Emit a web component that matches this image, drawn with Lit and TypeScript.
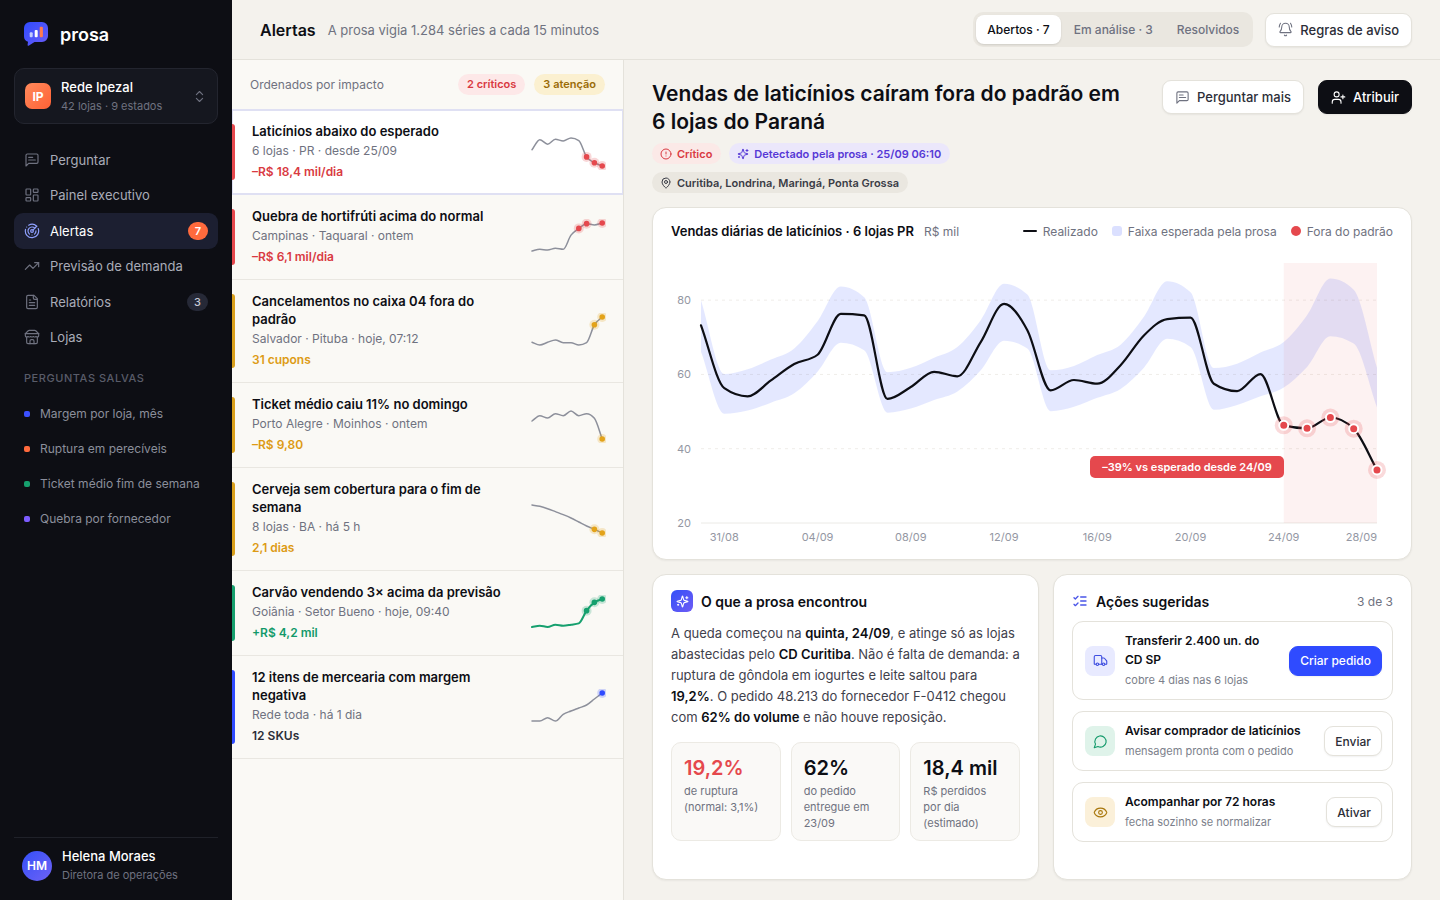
import { LitElement, html, svg, css, nothing } from "lit";
import { customElement, property } from "lit/decorators.js";
import { classMap } from "lit/directives/class-map.js";

type Point = [number, number];

/* Monotone cubic interpolation, as SVG curve segments. */
function curve(points: Point[], start = "M"): string {
  const n = points.length;
  const slope = (i: number) =>
    (points[i + 1][1] - points[i][1]) / (points[i + 1][0] - points[i][0]);
  const tangent = points.map((_, i) => {
    if (i === 0) return slope(0);
    if (i === n - 1) return slope(n - 2);
    const a = slope(i - 1);
    const b = slope(i);
    if (a * b <= 0) return 0;
    const sign = Math.sign(a);
    return sign * Math.min(Math.abs(a), Math.abs(b), Math.abs((a + b) / 4)) * 2;
  });
  let d = `${start}${points[0][0]},${points[0][1]}`;
  for (let i = 0; i < n - 1; i++) {
    const [x0, y0] = points[i];
    const [x1, y1] = points[i + 1];
    const dx = (x1 - x0) / 3;
    d += `C${(x0 + dx).toFixed(2)},${(y0 + tangent[i] * dx).toFixed(2)} ${(x1 - dx).toFixed(2)},${(y1 - tangent[i + 1] * dx).toFixed(2)} ${x1.toFixed(2)},${y1.toFixed(2)}`;
  }
  return d;
}

const ICONS = {
  message: svg`<path d="M21 15a2 2 0 0 1-2 2H7l-4 4V5a2 2 0 0 1 2-2h14a2 2 0 0 1 2 2z"/><path d="M13 8H7"/><path d="M17 12H7"/>`,
  dashboard: svg`<rect width="7" height="9" x="3" y="3" rx="1"/><rect width="7" height="5" x="14" y="3" rx="1"/><rect width="7" height="9" x="14" y="12" rx="1"/><rect width="7" height="5" x="3" y="16" rx="1"/>`,
  radar: svg`<path d="M19.07 4.93A10 10 0 0 0 6.99 3.34"/><path d="M4 6h.01"/><path d="M2.29 9.62A10 10 0 1 0 21.31 8.35"/><path d="M16.24 7.76A6 6 0 1 0 8.23 16.67"/><path d="M12 18h.01"/><path d="M17.99 11.66A6 6 0 0 1 15.77 16.67"/><circle cx="12" cy="12" r="2"/><path d="m13.41 10.59 5.66-5.66"/>`,
  trend: svg`<path d="M16 7h6v6"/><path d="m22 7-8.5 8.5-5-5L2 17"/>`,
  file: svg`<path d="M15 2H6a2 2 0 0 0-2 2v16a2 2 0 0 0 2 2h12a2 2 0 0 0 2-2V7Z"/><path d="M14 2v4a2 2 0 0 0 2 2h4"/><path d="M10 9H8"/><path d="M16 13H8"/><path d="M16 17H8"/>`,
  store: svg`<path d="m2 7 4.41-4.41A2 2 0 0 1 7.83 2h8.34a2 2 0 0 1 1.42.59L22 7"/><path d="M4 12v8a2 2 0 0 0 2 2h12a2 2 0 0 0 2-2v-8"/><path d="M15 22v-4a2 2 0 0 0-2-2h-2a2 2 0 0 0-2 2v4"/><path d="M2 7h20"/><path d="M22 7v3a2 2 0 0 1-2 2a2.7 2.7 0 0 1-1.59-.63.7.7 0 0 0-.82 0A2.7 2.7 0 0 1 16 12a2.7 2.7 0 0 1-1.59-.63.7.7 0 0 0-.82 0A2.7 2.7 0 0 1 12 12a2.7 2.7 0 0 1-1.59-.63.7.7 0 0 0-.82 0A2.7 2.7 0 0 1 8 12a2.7 2.7 0 0 1-1.59-.63.7.7 0 0 0-.82 0A2.7 2.7 0 0 1 4 12a2 2 0 0 1-2-2V7"/>`,
  updown: svg`<path d="m7 15 5 5 5-5"/><path d="m7 9 5-5 5 5"/>`,
  bell: svg`<path d="M10.268 21a2 2 0 0 0 3.464 0"/><path d="M22 8c0-2.3-.8-4.3-2-6"/><path d="M3.262 15.326A1 1 0 0 0 4 17h16a1 1 0 0 0 .74-1.673C19.41 13.956 18 12.499 18 8A6 6 0 0 0 6 8c0 4.499-1.411 5.956-2.738 7.326"/><path d="M4 2C2.8 3.7 2 5.7 2 8"/>`,
  userPlus: svg`<path d="M16 21v-2a4 4 0 0 0-4-4H6a4 4 0 0 0-4 4v2"/><circle cx="9" cy="7" r="4"/><path d="M19 8v6"/><path d="M22 11h-6"/>`,
  alert: svg`<circle cx="12" cy="12" r="10"/><path d="M12 8v4"/><path d="M12 16h.01"/>`,
  sparkles: svg`<path d="M9.937 15.5A2 2 0 0 0 8.5 14.063l-6.135-1.582a.5.5 0 0 1 0-.962L8.5 9.936A2 2 0 0 0 9.937 8.5l1.582-6.135a.5.5 0 0 1 .963 0L14.063 8.5A2 2 0 0 0 15.5 9.937l6.135 1.581a.5.5 0 0 1 0 .964L15.5 14.063a2 2 0 0 0-1.437 1.437l-1.582 6.135a.5.5 0 0 1-.963 0z"/><path d="M20 3v4"/><path d="M22 5h-4"/><path d="M4 17v2"/><path d="M5 18H3"/>`,
  pin: svg`<path d="M20 10c0 4.993-5.539 10.193-7.399 11.799a1 1 0 0 1-1.202 0C9.539 20.193 4 14.993 4 10a8 8 0 0 1 16 0"/><circle cx="12" cy="10" r="3"/>`,
  checks: svg`<path d="m3 17 2 2 4-4"/><path d="m3 7 2 2 4-4"/><path d="M13 6h8"/><path d="M13 12h8"/><path d="M13 18h8"/>`,
  truck: svg`<path d="M14 18V6a2 2 0 0 0-2-2H4a2 2 0 0 0-2 2v11a1 1 0 0 0 1 1h2"/><path d="M15 18H9"/><path d="M19 18h2a1 1 0 0 0 1-1v-3.65a1 1 0 0 0-.22-.624l-3.48-4.35A1 1 0 0 0 17.52 8H14"/><circle cx="17" cy="18" r="2"/><circle cx="7" cy="18" r="2"/>`,
  bubble: svg`<path d="M7.9 20A9 9 0 1 0 4 16.1L2 22Z"/>`,
  eye: svg`<path d="M2.062 12.348a1 1 0 0 1 0-.696 10.75 10.75 0 0 1 19.876 0 1 1 0 0 1 0 .696 10.75 10.75 0 0 1-19.876 0"/><circle cx="12" cy="12" r="3"/>`,
};
type IconName = keyof typeof ICONS;

const icon = (name: IconName, size = 16, weight = 1.75) => html`<svg
  class="icon" width=${size} height=${size} viewBox="0 0 24 24" fill="none"
  stroke="currentColor" stroke-width=${weight} stroke-linecap="round"
  stroke-linejoin="round" aria-hidden="true">${ICONS[name]}</svg>`;

const base = css`
  * { box-sizing: border-box; }
  a { color: inherit; text-decoration: none; }
  button { font: inherit; color: inherit; border: 0; background: none; padding: 0; cursor: pointer; }
  h1, h2, h3, p, ul { margin: 0; padding: 0; font-size: inherit; font-weight: inherit; }
  ul { list-style: none; }
  svg { display: block; flex: none; }
`;

/* ---------- Sidebar ---------- */

const NAV: { icon: IconName; label: string; count?: number; active?: boolean }[] = [
  { icon: "message", label: "Perguntar" },
  { icon: "dashboard", label: "Painel executivo" },
  { icon: "radar", label: "Alertas", count: 7, active: true },
  { icon: "trend", label: "Previsão de demanda" },
  { icon: "file", label: "Relatórios", count: 3 },
  { icon: "store", label: "Lojas" },
];

const SAVED = [
  { tone: "blue", label: "Margem por loja, mês" },
  { tone: "orange", label: "Ruptura em perecíveis" },
  { tone: "green", label: "Ticket médio fim de semana" },
  { tone: "violet", label: "Quebra por fornecedor" },
];

@customElement("prosa-sidebar")
export class ProsaSidebar extends LitElement {
  static styles = [base, css`
    :host {
      display: flex; flex-direction: column; padding: 20px 14px 16px;
      background: #0d0e14; color: #a9acb8; font-size: 13px;
    }
    .brand { display: flex; align-items: center; gap: 12px; height: 28px; padding: 0 10px; color: #fff; font-size: 18px; font-weight: 600; }
    .workspace {
      display: flex; align-items: center; gap: 10px; margin-top: 20px; height: 56px;
      padding: 0 10px; border: 1px solid #23252f; border-radius: 10px; background: #15171f; text-align: left;
    }
    .mark { display: grid; place-items: center; width: 26px; height: 26px; border-radius: 7px; background: linear-gradient(135deg, #ff8a5c, #ff6135); color: #fff; font-size: 12px; font-weight: 700; }
    .who { flex: 1; display: grid; gap: 1px; line-height: 18px; }
    .name { color: #fff; font-weight: 500; }
    .sub { color: #6f7280; font-size: 11px; }
    .workspace .icon { color: #6f7280; }
    .nav { display: grid; grid-auto-rows: 1fr; height: 213px; margin-top: 18px; }
    .item { display: flex; align-items: center; gap: 10px; padding: 0 10px; border-radius: 9px; }
    .item .icon { color: #6f7280; }
    .item .label { flex: 1; }
    .item.active { background: #1c1f31; color: #fff; }
    .item.active .icon { color: #8fa0ff; }
    .count { display: grid; place-items: center; min-width: 20px; height: 18px; padding: 0 7px; border-radius: 9px; background: #262937; color: #c8cad6; font-size: 11px; font-weight: 500; }
    .active .count { background: #ff6a3d; color: #fff; font-weight: 600; }
    .heading { margin-top: 14px; padding: 0 10px; line-height: 18px; color: #595c69; font-size: 11px; font-weight: 500; letter-spacing: 0.05em; }
    .saved { margin-top: 9px; }
    .saved a { display: flex; align-items: center; gap: 10px; height: 35px; padding: 0 10px; color: #8b8e9b; font-size: 12px; }
    .dot { width: 6px; height: 6px; border-radius: 2px; }
    .blue { background: #3b50ff; } .orange { background: #ff6a3d; }
    .green { background: #16a06e; } .violet { background: #7c5cff; }
    .user { display: flex; align-items: center; gap: 10px; margin-top: auto; padding: 9px 8px 0; border-top: 1px solid #1f2129; }
    .avatar { display: grid; place-items: center; width: 30px; height: 30px; border-radius: 50%; background: linear-gradient(135deg, #3450f8, #6e62f5); color: #fff; font-size: 12px; font-weight: 600; }
  `];

  render() {
    return html`
      <div class="brand">
        <svg width="24" height="24" viewBox="0 0 24 24" aria-hidden="true">
          <defs><linearGradient id="b" x1="0" y1="0" x2="1" y2="1"><stop stop-color="#2f4bff"/><stop offset="1" stop-color="#6a5cf6"/></linearGradient></defs>
          <path fill="url(#b)" d="M6 0h12a6 6 0 0 1 6 6v8a6 6 0 0 1-6 6h-7.500L5 23.600c-.8.500-1.500.1-1.400-.8L4 19.700A6 6 0 0 1 0 14V6a6 6 0 0 1 6-6z"/>
          <rect x="5.700" y="10.200" width="3" height="5" rx="1" fill="#c3ccff"/>
          <rect x="10.700" y="8" width="3" height="7.200" rx="1" fill="#fff"/>
          <rect x="15.700" y="4.700" width="3.200" height="10.500" rx="1" fill="#ff7a50"/>
        </svg>
        <span>prosa</span>
      </div>
      <button class="workspace">
        <span class="mark">IP</span>
        <span class="who"><span class="name">Rede Ipezal</span><span class="sub">42 lojas · 9 estados</span></span>
        ${icon("updown", 15)}
      </button>
      <nav class="nav">
        ${NAV.map((n) => html`
          <a href="#" class=${classMap({ item: true, active: !!n.active })}>
            ${icon(n.icon, 16)}<span class="label">${n.label}</span>
            ${n.count ? html`<span class="count">${n.count}</span>` : nothing}
          </a>`)}
      </nav>
      <h2 class="heading">PERGUNTAS SALVAS</h2>
      <ul class="saved">
        ${SAVED.map((s) => html`<li><a href="#"><span class="dot ${s.tone}"></span>${s.label}</a></li>`)}
      </ul>
      <div class="user">
        <span class="avatar">HM</span>
        <span class="who"><span class="name">Helena Moraes</span><span class="sub">Diretora de operações</span></span>
      </div>`;
  }
}

/* ---------- Alert list ---------- */

interface Alert {
  tone: "red" | "amber" | "green" | "blue";
  title: string; place: string; value: string;
  series: number[]; marks: number[];
}

const ALERTS: Alert[] = [
  { tone: "red", title: "Laticínios abaixo do esperado", place: "6 lojas · PR · desde 25/09", value: "–R$ 18,4 mil/dia", series: [50, 81, 67, 82, 77, 86, 78, 28, 10, 0], marks: [7, 8, 9] },
  { tone: "red", title: "Quebra de hortifrúti acima do normal", place: "Campinas · Taquaral · ontem", value: "–R$ 6,1 mil/dia", series: [0, 5, 3, 8, 5, 47, 67, 81, 77, 83], marks: [6, 7, 9] },
  { tone: "amber", title: "Cancelamentos no caixa 04 fora do padrão", place: "Salvador · Pituba · hoje, 07:12", value: "31 cupons", series: [8, 0, 8, 15, 7, 7, 0, 7, 60, 83], marks: [8, 9] },
  { tone: "amber", title: "Ticket médio caiu 11% no domingo", place: "Porto Alegre · Moinhos · ontem", value: "–R$ 9,80", series: [54, 70, 63, 76, 70, 84, 70, 76, 62, 0], marks: [9] },
  { tone: "amber", title: "Cerveja sem cobertura para o fim de semana", place: "8 lojas · BA · há 5 h", value: "2,1 dias", series: [84, 80, 73, 64, 55, 45, 33, 21, 11, 0], marks: [8, 9] },
  { tone: "green", title: "Carvão vendendo 3× acima da previsão", place: "Goiânia · Setor Bueno · hoje, 09:40", value: "+R$ 4,2 mil", series: [0, 4, 0, 7, 4, 7, 11, 49, 74, 84], marks: [7, 8, 9] },
  { tone: "blue", title: "12 itens de mercearia com margem negativa", place: "Rede toda · há 1 dia", value: "12 SKUs", series: [0, 0, 10, 0, 20, 30, 39, 48, 66, 84], marks: [9] },
];

@customElement("prosa-alert-list")
export class ProsaAlertList extends LitElement {
  static styles = [base, css`
    :host { display: block; background: #faf9f5; border-right: 1px solid #e4e2db; font-size: 12px; color: #6f7280; }
    .top { display: flex; align-items: center; gap: 9px; height: 50px; padding: 0 18px; border-bottom: 1px solid #dfe0f3; }
    .top .label { flex: 1; }
    .pill { padding: 0 9px; border-radius: 11px; line-height: 21px; font-size: 11px; font-weight: 600; }
    .pill.red { background: #fde8e8; color: #d93a42; }
    .pill.amber { background: #fbf0d0; color: #9a6b07; }
    .row { display: flex; border-bottom: 1px solid #e9e7e1; }
    .row.selected { background: #fff; border-color: #dfe0f3; box-shadow: inset 0 0 0 1px #dfe0f3; }
    .bar { flex: none; width: 3px; margin: 14px 0; border-radius: 0 3px 3px 0; }
    .body { flex: 1; display: flex; align-items: center; gap: 16px; padding: 12px 17px 13px; }
    .text { flex: 1; min-width: 0; line-height: 18px; }
    .title { max-width: 256px; color: #0d0e14; font-size: 13px; font-weight: 600; }
    .place { margin-top: 2px; }
    .value { margin-top: 3px; font-weight: 600; }
    .red .bar { background: #e5484d; } .amber .bar { background: #d9a01c; }
    .green .bar { background: #16a06e; } .blue .bar { background: #2f4bff; }
    .red .value { color: #d93a42; } .amber .value { color: #dd9b14; }
    .green .value { color: #12996a; } .blue .value { color: #2c2e38; }
    .line { fill: none; stroke: #8d909b; stroke-width: 1.5; stroke-linecap: round; }
    .green .line { stroke: #16a06e; stroke-width: 2; }
    .red .mark { fill: #e5484d; } .amber .mark { fill: #e3a31a; }
    .green .mark { fill: #16a06e; } .blue .mark { fill: #2f4bff; }
    .mark.halo { opacity: 0.22; }
  `];

  private spark(a: Alert) {
    const max = Math.max(...a.series);
    const pts = a.series.map((v, i): Point => [2 + i * 7.8, 32 - (v / max) * 28]);
    return html`<svg width="76" height="36" viewBox="0 0 76 36" aria-hidden="true">
      <path class="line" d=${curve(pts)} />
      ${a.marks.map((m) => svg`<circle class="mark halo" cx=${pts[m][0]} cy=${pts[m][1]} r="5"/><circle class="mark" cx=${pts[m][0]} cy=${pts[m][1]} r="2.800"/>`)}
    </svg>`;
  }

  render() {
    return html`
      <div class="top">
        <span class="label">Ordenados por impacto</span>
        <span class="pill red">2 críticos</span><span class="pill amber">3 atenção</span>
      </div>
      <ul>
        ${ALERTS.map((a, i) => html`<li>
          <a href="#" class=${classMap({ row: true, selected: i === 0, [a.tone]: true })}>
            <span class="bar"></span>
            <div class="body">
              <div class="text">
                <h3 class="title">${a.title}</h3>
                <p class="place">${a.place}</p>
                <p class="value">${a.value}</p>
              </div>
              ${this.spark(a)}
            </div>
          </a></li>`)}
      </ul>`;
  }
}

/* ---------- Sales chart ---------- */

const ACTUAL = [73.2, 56.3, 54.1, 58.4, 62.8, 65.3, 76.3, 75.9, 53.4, 56.6, 60.7, 59.5, 68.7, 79, 71.9, 55.7, 58.5, 57.5, 62.5, 70.5, 74.9, 75.3, 57.5, 55.5, 60.1, 46.3, 45.5, 48.4, 45.4, 34.3];
const UPPER = [80, 60.1, 61.4, 64, 67, 74.3, 83.7, 80.8, 60.6, 61.8, 64.5, 67.4, 74.6, 84.4, 81.5, 61.1, 62.3, 65.2, 68, 75.5, 85.1, 82.1, 61.7, 62.9, 65.9, 68.7, 75.9, 85.8, 82.8, 61.8];
const LOWER = [66.1, 49.4, 50.3, 52.4, 54.9, 60.7, 68.5, 66.5, 49.7, 50.8, 53.1, 55.4, 61.1, 69.1, 67, 50.1, 51.3, 53.7, 56.1, 61.8, 69.6, 67.4, 50.5, 51.8, 54.1, 56.5, 62, 70.3, 68.3, 51.1];
const DAYS: [number, string][] = [[1, "31/08"], [5, "04/09"], [9, "08/09"], [13, "12/09"], [17, "16/09"], [21, "20/09"], [25, "24/09"], [29, "28/09"]];

@customElement("prosa-sales-chart")
export class ProsaSalesChart extends LitElement {
  @property({ type: Number }) anomalyFrom = 25;

  static styles = [base, css`
    :host { display: block; }
    svg { width: 100%; height: auto; overflow: visible; }
    text { font-size: 11px; fill: #9497a3; }
    .end { text-anchor: end; } .mid { text-anchor: middle; }
    .grid { stroke: #efede9; stroke-dasharray: 3 4; }
    .axis { stroke: #ebeae6; }
    .band { fill: #2f4bff; opacity: 0.13; }
    .zone { fill: #e5484d; opacity: 0.07; }
    .line { fill: none; stroke: #0d0e14; stroke-width: 2.2; stroke-linecap: round; stroke-linejoin: round; }
    .halo { fill: #e5484d; opacity: 0.2; }
    .point { fill: #e5484d; stroke: #fff; stroke-width: 2; }
    .flag { fill: #e5484d; }
    .flag-text { fill: #fff; font-weight: 600; }
  `];

  render() {
    const x = (i: number) => 30 + (i * 676) / 29;
    const y = (v: number) => 268 - ((v - 20) * 260) / 70;
    const pts = (s: number[]) => s.map((v, i): Point => [x(i), y(v)]);
    const from = this.anomalyFrom;
    return html`<svg viewBox="0 0 722 290" role="img" aria-label="Vendas diárias de laticínios">
      ${[80, 60, 40].map((v) => svg`<line class="grid" x1="30" x2="706" y1=${y(v)} y2=${y(v)}/>`)}
      <line class="axis" x1="30" x2="706" y1="268" y2="268" />
      ${[80, 60, 40, 20].map((v) => svg`<text class="end" x="20" y=${y(v) + 4}>${v}</text>`)}
      <path class="band" d="${curve(pts(UPPER))}${curve(pts(LOWER).reverse(), "L")}Z" />
      <rect class="zone" x=${x(from)} y="8" width=${x(29) - x(from)} height="260" />
      <path class="line" d=${curve(pts(ACTUAL))} />
      ${pts(ACTUAL).slice(from).map(([cx, cy]) => svg`<circle class="halo" cx=${cx} cy=${cy} r="9"/><circle class="point" cx=${cx} cy=${cy} r="4.500"/>`)}
      <rect class="flag" x="419" y="201" width="194" height="22" rx="5" />
      <text class="flag-text mid" x="516" y="216">–39% vs esperado desde 24/09</text>
      ${DAYS.map(([i, d]) => i === 29
        ? svg`<text class="end" x="706" y="286">${d}</text>`
        : svg`<text class="mid" x=${x(i)} y="286">${d}</text>`)}
    </svg>`;
  }
}

/* ---------- Alert detail ---------- */

const STATS = [
  { value: "19,2%", label: "de ruptura (normal: 3,1%)", bad: true },
  { value: "62%", label: "do pedido entregue em 23/09" },
  { value: "18,4 mil", label: "R$ perdidos por dia (estimado)" },
];

const ACTIONS: { icon: IconName; tone: string; title: string; note: string; cta: string; primary?: boolean }[] = [
  { icon: "truck", tone: "blue", title: "Transferir 2.400 un. do CD SP", note: "cobre 4 dias nas 6 lojas", cta: "Criar pedido", primary: true },
  { icon: "bubble", tone: "green", title: "Avisar comprador de laticínios", note: "mensagem pronta com o pedido", cta: "Enviar" },
  { icon: "eye", tone: "amber", title: "Acompanhar por 72 horas", note: "fecha sozinho se normalizar", cta: "Ativar" },
];

const buttons = css`
  .btn {
    display: inline-flex; align-items: center; justify-content: center; gap: 7px; height: 34px; padding: 0 12px;
    border: 1px solid #e4e2db; border-radius: 9px; background: #fff; color: #2c2e38;
    font-size: 13px; font-weight: 500; white-space: nowrap; box-shadow: 0 1px 2px rgba(13, 14, 20, 0.06);
  }
  .btn .icon { color: #6f7280; }
  .btn.dark { background: #0d0e14; border-color: #0d0e14; color: #fff; }
  .btn.dark .icon { color: #fff; }
`;

@customElement("prosa-alert-detail")
export class ProsaAlertDetail extends LitElement {
  static styles = [base, buttons, css`
    :host { display: flex; flex-direction: column; gap: 14px; padding: 20px 28px; min-width: 0; }
    .head { display: flex; align-items: flex-start; gap: 28px; }
    .intro { flex: 1; min-width: 0; }
    .headline { color: #0d0e14; font-size: 21px; line-height: 28px; font-weight: 600; }
    .tags { display: flex; flex-wrap: wrap; gap: 8px; margin-top: 7px; }
    .tag { display: flex; align-items: center; gap: 5px; height: 21px; padding: 0 9px 0 8px; border-radius: 11px; font-size: 11px; font-weight: 600; background: #eae7e0; color: #3a3c46; }
    .tag.red { background: #fbe9e7; color: #d93a42; }
    .tag.violet { background: #ebe7fb; color: #5638d6; }
    .buttons { display: flex; gap: 14px; }
    .card { background: #fff; border: 1px solid #e4e2db; border-radius: 14px; padding: 14px 18px; box-shadow: 0 1px 2px rgba(13, 14, 20, 0.05); }
    .chart-head { display: flex; align-items: center; gap: 10px; height: 18px; margin-bottom: 15px; font-size: 12px; color: #6f7280; }
    .chart-title { color: #0d0e14; font-size: 13px; font-weight: 600; white-space: nowrap; }
    .unit { flex: 1; }
    .legend { display: flex; gap: 14px; }
    .legend li { display: flex; align-items: center; gap: 6px; white-space: nowrap; }
    .key { width: 10px; height: 10px; }
    .key.line { width: 14px; height: 2px; background: #0d0e14; border-radius: 1px; }
    .key.band { background: #dbe0ff; border-radius: 3px; }
    .key.out { background: #e5484d; border-radius: 50%; }
    .pair { flex: 1; display: grid; grid-template-columns: 387fr 359fr; gap: 14px; }
    .card-head { display: flex; align-items: center; gap: 8px; height: 24px; color: #0d0e14; font-size: 14px; font-weight: 600; }
    .spark { display: grid; place-items: center; width: 22px; height: 22px; border-radius: 6px; background: linear-gradient(135deg, #3450f8, #6e5cf5); color: #fff; }
    .story { margin-top: 10px; color: #3f414c; font-size: 13px; line-height: 21px; }
    .story b { color: #0d0e14; font-weight: 600; }
    .stats { display: grid; grid-template-columns: repeat(3, minmax(0, 1fr)); gap: 10px; margin-top: 14px; }
    .stat { padding: 12px 16px 9px 12px; border: 1px solid #eceae4; border-radius: 10px; background: #faf9f7; color: #6f7280; font-size: 11px; line-height: 16px; }
    .stat strong { display: block; margin-bottom: 2px; color: #0d0e14; font-size: 20px; line-height: 26px; font-weight: 600; white-space: nowrap; }
    .stat.bad strong { color: #e5484d; }
    .actions-head .icon { color: #4a55e8; }
    .progress { margin-left: auto; color: #6f7280; font-size: 12px; font-weight: 400; }
    .actions { display: grid; gap: 11px; margin-top: 8px; }
    .action { display: flex; align-items: center; gap: 10px; padding: 9px 10px 9px 12px; border: 1px solid #e4e2db; border-radius: 11px; }
    .tile { flex: none; display: grid; place-items: center; width: 30px; height: 30px; border-radius: 8px; }
    .tile.blue { background: #e8eaff; color: #3d4de0; }
    .tile.green { background: #dff3ea; color: #12996a; }
    .tile.amber { background: #fbf0d9; color: #a8760b; }
    .what { flex: 1; min-width: 0; line-height: 19px; }
    .what h3 { max-width: 186px; color: #0d0e14; font-size: 12px; font-weight: 600; }
    .what p { margin-top: 2px; color: #7c7f8b; font-size: 11px; }
    .btn.small { height: 30px; padding: 0 10px; font-size: 12px; }
    .btn.primary { background: #2f4bff; border-color: #2f4bff; color: #fff; }
  `];

  render() {
    return html`
      <div class="head">
        <div class="intro">
          <h1 class="headline">Vendas de laticínios caíram fora do padrão em 6 lojas do Paraná</h1>
          <div class="tags">
            <span class="tag red">${icon("alert", 12, 2)}Crítico</span>
            <span class="tag violet">${icon("sparkles", 12, 2)}Detectado pela prosa · 25/09 06:10</span>
            <span class="tag">${icon("pin", 12, 2)}Curitiba, Londrina, Maringá, Ponta Grossa</span>
          </div>
        </div>
        <div class="buttons">
          <button class="btn">${icon("message", 15)}Perguntar mais</button>
          <button class="btn dark">${icon("userPlus", 15)}Atribuir</button>
        </div>
      </div>
      <section class="card">
        <div class="chart-head">
          <h2 class="chart-title">Vendas diárias de laticínios · 6 lojas PR</h2>
          <span class="unit">R$ mil</span>
          <ul class="legend">
            <li><span class="key line"></span>Realizado</li>
            <li><span class="key band"></span>Faixa esperada pela prosa</li>
            <li><span class="key out"></span>Fora do padrão</li>
          </ul>
        </div>
        <prosa-sales-chart></prosa-sales-chart>
      </section>
      <div class="pair">
        <section class="card">
          <h2 class="card-head"><span class="spark">${icon("sparkles", 13, 2)}</span>O que a prosa encontrou</h2>
          <p class="story">A queda começou na <b>quinta, 24/09</b>, e atinge só as lojas abastecidas pelo <b>CD Curitiba</b>. Não é falta de demanda: a ruptura de gôndola em iogurtes e leite saltou para <b>19,2%</b>. O pedido 48.213 do fornecedor F-0412 chegou com <b>62% do volume</b> e não houve reposição.</p>
          <div class="stats">
            ${STATS.map((s) => html`<div class=${classMap({ stat: true, bad: !!s.bad })}><strong>${s.value}</strong>${s.label}</div>`)}
          </div>
        </section>
        <section class="card">
          <div class="card-head actions-head">${icon("checks", 16, 2)}<h2>Ações sugeridas</h2><span class="progress">3 de 3</span></div>
          <ul class="actions">
            ${ACTIONS.map((a) => html`<li class="action">
              <span class="tile ${a.tone}">${icon(a.icon, 15)}</span>
              <div class="what"><h3>${a.title}</h3><p>${a.note}</p></div>
              <button class=${classMap({ btn: true, small: true, primary: !!a.primary })}>${a.cta}</button>
            </li>`)}
          </ul>
        </section>
      </div>`;
  }
}

/* ---------- Shell ---------- */

@customElement("app-root")
export class AppRoot extends LitElement {
  static styles = [base, buttons, css`
    :host {
      display: grid; grid-template-columns: 232px minmax(0, 1fr); min-height: 100vh;
      background: #f4f2ed; color: #2c2e38; font-family: Inter, "Liberation Sans", sans-serif; font-size: 13px;
    }
    .main { display: flex; flex-direction: column; min-width: 0; }
    .bar { display: flex; align-items: center; gap: 12px; height: 60px; padding: 0 28px; border-bottom: 1px solid #e4e2db; }
    .title { color: #0d0e14; font-size: 16px; font-weight: 600; }
    .hint { flex: 1; color: #6f7280; }
    .tabs { display: flex; gap: 2px; padding: 3px; border-radius: 10px; background: #eae7e0; }
    .tab { height: 29px; padding: 0 11px; border-radius: 8px; color: #6f7280; font-size: 12px; font-weight: 500; white-space: nowrap; }
    .tab.on { background: #fff; color: #0d0e14; box-shadow: 0 1px 2px rgba(13, 14, 20, 0.12); }
    .content { flex: 1; display: grid; grid-template-columns: 392px minmax(0, 1fr); }
  `];

  render() {
    return html`
      <prosa-sidebar></prosa-sidebar>
      <main class="main">
        <header class="bar">
          <h1 class="title">Alertas</h1>
          <span class="hint">A prosa vigia 1.284 séries a cada 15 minutos</span>
          <div class="tabs" role="tablist">
            <button class="tab on" role="tab" aria-selected="true">Abertos · 7</button>
            <button class="tab" role="tab" aria-selected="false">Em análise · 3</button>
            <button class="tab" role="tab" aria-selected="false">Resolvidos</button>
          </div>
          <button class="btn">${icon("bell", 15)}Regras de aviso</button>
        </header>
        <div class="content">
          <prosa-alert-list></prosa-alert-list>
          <prosa-alert-detail></prosa-alert-detail>
        </div>
      </main>`;
  }
}
